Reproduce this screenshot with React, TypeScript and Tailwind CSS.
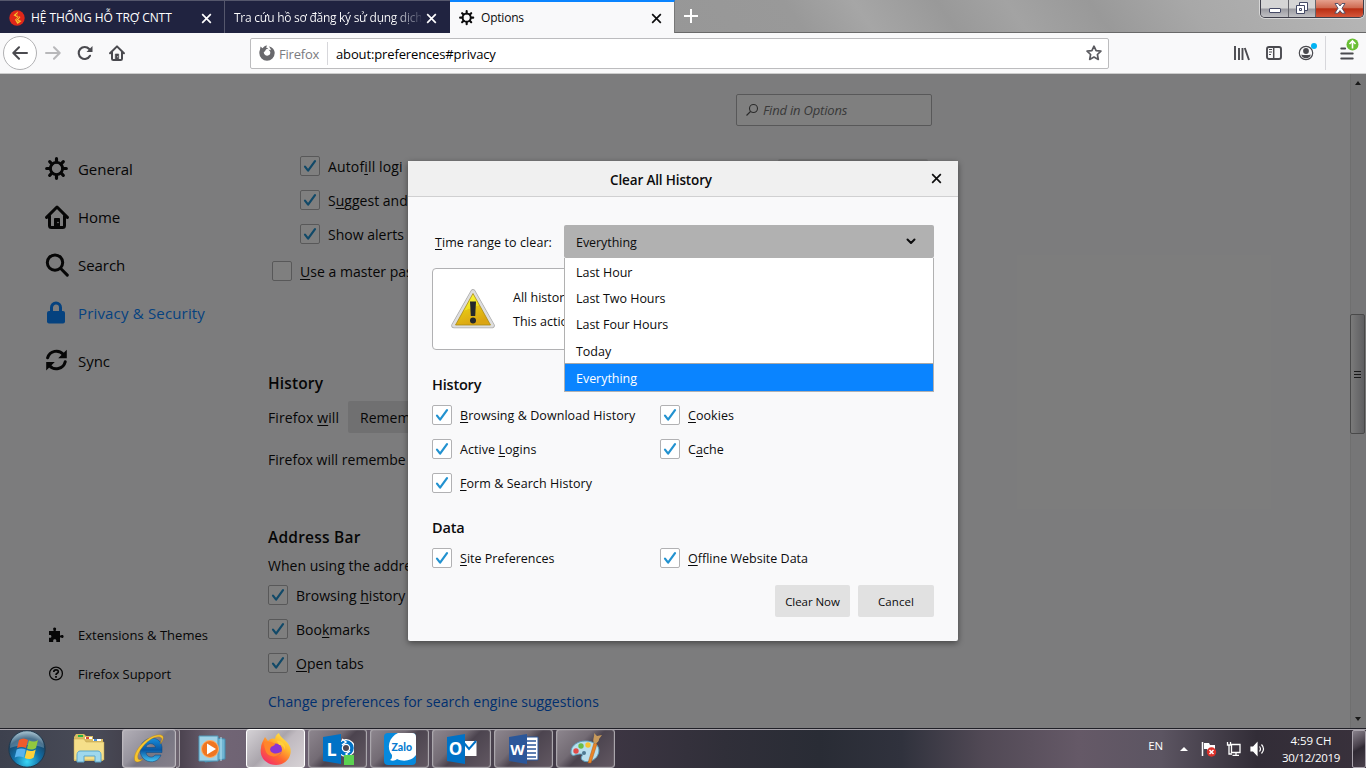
import React from "react";

type Kids = { children?: React.ReactNode };

const U = ({ children }: Kids) => (
  <span className="underline decoration-1 underline-offset-[2px] [text-decoration-skip-ink:none]">{children}</span>
);

function CloseX({ className }: { className: string }) {
  return (
    <svg className={className} width="12" height="12" viewBox="0 0 12 12" fill="none" stroke="currentColor" strokeWidth="1.8">
      <path d="M1.3 1.3 10.7 10.7M10.7 1.3 1.3 10.7" />
    </svg>
  );
}

function Gear({ size }: { size: number }) {
  return (
    <svg width={size} height={size} viewBox="0 0 24 24" fill="none" stroke="currentColor">
      <circle cx="11.5" cy="11.5" r="6.1" strokeWidth="2.9" />
      <path
        strokeWidth="3.2"
        strokeLinecap="round"
        d="M11.500 5V1.700M11.500 18v3.300M5 11.500H1.700M18 11.500h3.300M6.800 6.800 4.700 4.700M16.200 16.200l2.100 2.100M6.800 16.200 4.700 18.300M16.200 6.800l2.100-2.100"
      />
    </svg>
  );
}

function House({ size }: { size: number }) {
  return (
    <svg width={size} height={size} viewBox="0 0 24 24" fill="none" stroke="currentColor" strokeWidth="3" strokeLinejoin="round" strokeLinecap="round">
      <path d="M1.600 12.400 12 2l10.400 10.400" />
      <path d="M4.500 11v9.500a2 2 0 0 0 2 2h11a2 2 0 0 0 2-2V11" />
      <path d="M9.500 22v-8.500h5V22z" fill="currentColor" strokeWidth="1" />
      <circle cx="13" cy="17.500" r=".8" fill="#fff" stroke="none" />
    </svg>
  );
}

function SearchIcon() {
  return (
    <svg width="24" height="24" viewBox="0 0 24 24" fill="none" stroke="currentColor" strokeWidth="3" strokeLinecap="round">
      <circle cx="10" cy="9.600" r="7.700" />
      <path d="m15.700 15.500 6.600 6.600" />
    </svg>
  );
}

function LockIcon() {
  return (
    <svg width="24" height="24" viewBox="0 0 24 24">
      <rect x="2" y="10" width="18" height="12.500" rx="2" fill="currentColor" />
      <path d="M6.500 11V6.500a4.500 4.500 0 0 1 9 0V11" fill="none" stroke="currentColor" strokeWidth="3" />
    </svg>
  );
}

function SyncIcon() {
  return (
    <svg width="24" height="24" viewBox="0 0 24 24" fill="none" stroke="currentColor" strokeWidth="3">
      <path d="M2.600 8.800A9.200 9.200 0 0 1 18.500 5.500M20.200 12.800A9.200 9.200 0 0 1 4.300 16.500" strokeLinecap="round" />
      <path d="M21.800.8v8.400h-8.600zM1.200 21.400V13h8.600z" fill="currentColor" stroke="none" />
    </svg>
  );
}

function Check() {
  return (
    <span className="flex h-5 w-5 shrink-0 items-center justify-center rounded-[2px] border border-[#b1b1b3] bg-white">
      <svg width="18" height="18" viewBox="0 0 18 18" fill="none" stroke="#2292d0" strokeWidth="2.2" strokeLinecap="round" strokeLinejoin="round">
        <path d="m4 9.700 3.100 4L14 4.100" />
      </svg>
    </span>
  );
}

function Tabs() {
  return (
    <div className="flex h-[33px] shrink-0 items-start border-b border-[#696969] bg-[linear-gradient(55deg,#8d8d8d_0%,#999_58%,#a6a6a6_63%,#999_69%,#a3a3a3_74%,#999_80%,#a8a8a8_87%,#b6b6b6_100%)]">
      <div className="flex h-[33px] w-[225px] items-center border-t border-r border-[#55576c] bg-[#202340] pt-[2px] pl-[9px] text-white">
        <svg width="16" height="16" viewBox="0 0 16 16">
          <circle cx="8" cy="8" r="7.700" fill="#df2719" />
          <path d="M9 1.500 4.500 5.200 8.500 7.500 6 9.800 8.500 14l4-3-3.300-1.200 2.300-2.800-3.500-1.500z" fill="#f7c72e" />
          <path d="M9 3 7 5l3 2-2.500 2.500 2 2.500" stroke="#e8541e" fill="none" />
        </svg>
        <span className="ml-[6px] w-[170px] text-[12px] tracking-[-0.06px] whitespace-nowrap">HỆ THỐNG HỖ TRỢ CNTT</span>
        <CloseX className="h-[11px] w-[11px]" />
      </div>
      <div className="flex h-[33px] w-[225px] items-center border-t border-[#55576c] bg-[#202340] pt-[2px] pl-[9px] text-white">
        <span className="w-[187px] bg-linear-to-r from-white from-85% to-[#40435c] to-100% bg-clip-text text-[12px] tracking-[-0.28px] whitespace-nowrap text-transparent">
          Tra cứu hồ sơ đăng ký sử dụng dịch
        </span>
        <CloseX className="ml-[5px] h-[11px] w-[11px]" />
      </div>
      <div className="flex h-[34px] w-[225px] items-center border-t-2 border-r border-t-[#0a84ff] border-r-[#777] bg-[#f9f9fa] pl-[9px] text-[#0c0c0d]">
        <Gear size={16} />
        <span className="ml-[6px] w-[170px] text-[12px] tracking-[-0.2px]">Options</span>
        <CloseX className="h-[11px] w-[11px]" />
      </div>
      <svg className="mt-[9px] ml-[9px]" width="14" height="14" viewBox="0 0 14 14" stroke="#fff" strokeWidth="2">
        <path d="M7 0v14M0 7h14" />
      </svg>
      <div className="mr-[2px] ml-auto flex h-[18px] w-[104px] overflow-hidden rounded-b-[5px] border border-t-0 border-[#3e3e4a] shadow-[0_0_0_1px_rgba(255,255,255,.5)]">
        <div className="flex w-[28px] justify-center border-r border-[#66666c] bg-[linear-gradient(#d5d5d5_0_48%,#9a9aa0_52%,#c0c0c4)] pt-[8px]">
          <span className="h-[5px] w-[12px] rounded-[1px] border border-[#454a66] bg-white" />
        </div>
        <div className="flex w-[27px] justify-center border-r border-[#66666c] bg-[linear-gradient(#d5d5d5_0_48%,#9a9aa0_52%,#c0c0c4)] pt-[2px]">
          <svg width="12" height="12" viewBox="0 0 12 12" fill="#fff" stroke="#454a66">
            <path d="M3.500.5h8v8h-8z" />
            <path d="M.5 3.500h8v8h-8z" />
            <path d="M3.500 6.500h2v2h-2z" />
          </svg>
        </div>
        <div className="flex flex-1 justify-center bg-[linear-gradient(#e5a08d_0,#cf6b52_45%,#b92e13_52%,#d5563a)] pt-[3px]">
          <svg width="12" height="11" viewBox="0 0 12 11">
            <path d="M1 .5h3l2 2.500 2-2.500h3L8 5.300l3.200 4.900H8L6 7.600l-2 2.600H.8L4 5.300z" fill="#fff" stroke="#4b4a63" strokeWidth=".9" />
          </svg>
        </div>
      </div>
    </div>
  );
}

function Toolbar() {
  return (
    <div className="flex h-[41px] shrink-0 items-center border-b border-[#ccc] bg-[#f9f9fa] text-[#4a4a4f]">
      <div className="ml-[3px] flex h-[34px] w-[34px] items-center justify-center rounded-full border border-[#b1b1b3] bg-white">
        <svg width="16" height="16" viewBox="0 0 16 16" fill="none" stroke="currentColor" strokeWidth="2" strokeLinecap="round" strokeLinejoin="round">
          <path d="M15 8H1.500M7 2.300 1.300 8 7 13.700" />
        </svg>
      </div>
      <svg className="ml-2 text-[#b8b8ba]" width="16" height="16" viewBox="0 0 16 16" fill="none" stroke="currentColor" strokeWidth="2" strokeLinecap="round" strokeLinejoin="round">
        <path d="M1 8h13.500M9 2.300 14.700 8 9 13.700" />
      </svg>
      <svg className="ml-4" width="16" height="16" viewBox="0 0 16 16" fill="none" stroke="currentColor" strokeWidth="2.100" strokeLinecap="round">
        <path d="M13 10.800A6 6 0 1 1 12.200 4" />
        <path d="M15.500 1v6h-6z" fill="currentColor" stroke="none" />
      </svg>
      <div className="ml-4">
        <House size={16} />
      </div>
      <div className="ml-[125px] flex h-[31px] w-[859px] items-center rounded-[2px] border border-[#bcbcbe] bg-white pl-2">
        <svg width="16" height="16" viewBox="0 0 16 16" fill="#68686c">
          <path d="M1 4.800 1.500 1.500l2 1.800C4.300 2.300 5.800.6 8.200.5L7 2.400l2.300.8C8.300 4 7 4 6.500 5.200c-.4 1-1.300 1.300-1.800 2.300.3 2 1.700 3.200 3.600 3.200 2 0 3.200-1.600 3-3.400-.2-1.300-1-2-2-2.600 1.200-.2 2 .2 2.600.6-.2-1.500-1-2.800-2.200-3.900C13.500 2 15.700 4.600 15.700 8A7.700 7.700 0 0 1 .3 8c0-1.200.2-2.200.7-3.200z" />
        </svg>
        <span className="ml-1 w-[48px] pt-[3px] text-[13px] tracking-[-0.2px] text-[#7b7b80]">Firefox</span>
        <span className="h-[23px] border-r border-[#d7d7db]" />
        <span className="ml-2 w-[750px] pt-[3px] text-[13px] tracking-[-0.13px] text-black">about:preferences#privacy</span>
        <svg width="16" height="16" viewBox="0 0 16 16" fill="none" stroke="#5a5a5f" strokeWidth="1.700" strokeLinejoin="round">
          <path d="m8 1.200 2.100 4.400 4.800.6-3.500 3.300.9 4.900L8 12l-4.300 2.400.9-4.900L1.100 6.200l4.800-.6z" />
        </svg>
      </div>
      <svg className="ml-[125px]" width="16" height="16" viewBox="0 0 16 16" fill="none" stroke="currentColor" strokeWidth="2">
        <path d="M1 1v14M5 3v12M8.500 3v12M10.800 3l4.200 12" strokeWidth="1.900" />
      </svg>
      <svg className="ml-4" width="16" height="16" viewBox="0 0 16 16" fill="none" stroke="currentColor">
        <rect x="1" y="2" width="14" height="12" rx="2" strokeWidth="1.900" />
        <path d="M7.700 2v12" strokeWidth="1.500" />
        <path d="M3 4.500h3M3 7h3M3 9.500h2" />
      </svg>
      <div className="relative ml-4 h-4 w-4">
        <svg width="16" height="16" viewBox="0 0 16 16">
          <circle cx="8" cy="8" r="6.700" fill="none" stroke="currentColor" strokeWidth="1.200" />
          <circle cx="8" cy="6" r="2.900" fill="currentColor" />
          <path d="M3.300 9.500c1.400.8 8 .8 9.400 0C12.500 12 10.500 13.300 8 13.300S3.500 12 3.300 9.500z" fill="currentColor" />
        </svg>
        <span className="absolute -top-[2px] left-[13px] h-[6px] w-[6px] rounded-full bg-[#00b3f4]" />
      </div>
      <span className="ml-[11px] h-[34px] border-r border-[#d7d7db]" />
      <div className="relative ml-[14px] h-4 w-4">
        <svg width="14" height="16" viewBox="0 0 14 16" stroke="currentColor" strokeWidth="1.800">
          <path d="M1.200 3.500h4M1.200 8.500h11.600M1.200 13.500h11.600" strokeLinecap="round" />
        </svg>
        <svg className="absolute -top-[7px] left-[6px]" width="13" height="13" viewBox="0 0 13 13">
          <circle cx="6.500" cy="6.500" r="6" fill="#6abf34" />
          <path d="M6.500 10.500V3.500M3.500 6l3-3 3 3" stroke="#fff" strokeWidth="1.600" fill="none" />
        </svg>
      </div>
    </div>
  );
}

const NAV: [React.ReactNode, string, boolean][] = [
  [<Gear size={24} />, "General", false],
  [<House size={24} />, "Home", false],
  [<SearchIcon />, "Search", false],
  [<LockIcon />, "Privacy & Security", true],
  [<SyncIcon />, "Sync", false],
];

function Sidebar() {
  return (
    <nav className="flex w-[268px] shrink-0 flex-col pt-[71px] pl-[45px]">
      {NAV.map(([icon, label, on]) => (
        <div key={label} className={"flex h-12 items-center gap-[9px] text-[15px] " + (on ? "tracking-[0.17px] text-[#0a84ff]" : "tracking-[-0.05px]")}>
          {icon}
          <span>{label}</span>
        </div>
      ))}
      <div className="mt-[230px] flex h-[39px] items-center pl-[3px] text-[13px] tracking-[0.02px]">
        <svg width="17" height="16" viewBox="0 0 17 16" fill="currentColor">
          <path d="M1 4h4.200c.5 0 .5-.5.300-.9C4.700 1.600 5.200.4 6.600.4s2 1.200 1.200 2.700c-.2.400-.2.900.3.900H12v4c0 .6.500.6.900.4 1.400-.9 2.700-.4 2.700 1s-1.300 2-2.700 1.100c-.4-.3-.9-.2-.9.400V15H8.300v-1.500c0-.7-.8-1.200-1.600-1.200s-1.500.5-1.500 1.200V15H1v-4.200h1.200c.7 0 1.200-.6 1.200-1.400S2.900 8 2.200 8H1z" />
        </svg>
        <span className="ml-[13px] pt-[2px]">Extensions &amp; Themes</span>
      </div>
      <div className="flex h-[39px] items-center pl-[3px] text-[13px] tracking-[-0.05px]">
        <svg width="17" height="16" viewBox="0 0 17 16" fill="none" stroke="currentColor">
          <circle cx="8" cy="7.500" r="6.400" strokeWidth="1.300" />
          <path d="M5.800 6c0-3 4.500-2.800 4.500-.3 0 1.700-2.300 1.500-2.300 3.300" strokeWidth="1.700" />
          <path d="M8 10v1.700" strokeWidth="1.800" />
        </svg>
        <span className="ml-[13px] pt-[2px]">Firefox Support</span>
      </div>
    </nav>
  );
}

function Row({ children, className = "" }: Kids & { className?: string }) {
  return <div className={"flex h-[34px] items-center gap-2 whitespace-nowrap " + className}>{children}</div>;
}

function Preferences() {
  return (
    <main className="flex w-[664px] flex-col pt-5 text-[14px] tracking-[0.02px]">
      <div className="flex h-8 w-[196px] shrink-0 items-center self-end rounded-[2px] border border-[#b1b1b3] bg-white pl-2 text-[13px] tracking-[-0.18px] text-[#737373] italic">
        <svg className="mr-1 text-[#555]" width="14" height="14" viewBox="0 0 14 14" fill="none" stroke="currentColor" strokeWidth="1.100">
          <circle cx="8.500" cy="5.500" r="4" />
          <path d="m5.500 8.500-4 4" />
        </svg>
        <span className="pt-[2px]">Find in Options</span>
      </div>
      <div className="mt-[23px] flex h-[102px] justify-between">
        <div className="pl-8">
          <Row><Check /><span className="tracking-[0.14px]">Autof<U>i</U>ll logi</span></Row>
          <Row><Check /><span>S<U>u</U>ggest and</span></Row>
          <Row><Check /><span>Show alerts</span></Row>
        </div>
        <div className="mt-[10px] mr-1 h-8 w-[150px] rounded-[2px] bg-[#e1e1e2]" />
      </div>
      <Row className="mt-[3px] pl-1">
        <span className="h-5 w-5 rounded-[2px] border border-[#b1b1b3] bg-white" />
        <span><U>U</U>se a master pas</span>
      </Row>
      <h2 className="mt-[83px] flex h-[26px] items-center text-[15.500px] font-semibold tracking-[0.15px]">History</h2>
      <Row className="mt-[3px]">
        <span className="w-[72px] tracking-[0.1px]">Firefox <U>w</U>ill</span>
        <span className="flex h-8 w-[260px] items-center rounded-[2px] bg-[#e1e1e2] pl-3">Remem</span>
      </Row>
      <Row className="mt-[8px]">Firefox will remembe</Row>
      <h2 className="mt-[49px] flex h-[26px] items-center text-[15.500px] font-semibold tracking-[0.22px]">Address Bar</h2>
      <Row className="mt-[-3px]">When using the addre</Row>
      <Row className="mt-[-4px]"><Check /><span>Browsing <U>h</U>istory</span></Row>
      <Row><Check /><span>Boo<U>k</U>marks</span></Row>
      <Row><Check /><span><U>O</U>pen tabs</span></Row>
      <Row className="mt-[4px] tracking-[0.04px] text-[#0060df]">Change preferences for search engine suggestions</Row>
    </main>
  );
}

function Scrollbar() {
  return (
    <div className="ml-auto flex w-[16px] flex-col items-center border-l border-[#dedede] bg-[#ededee] pr-px">
      <span className="mt-[7px] border-x-[3.500px] border-b-[4px] border-x-transparent border-b-[#333]" />
      <div className="mt-[229px] -ml-px flex h-[120px] w-[15px] flex-col items-center justify-center gap-[2px] rounded-[2px] border border-[#929292] bg-linear-to-r from-[#f5f5f5] to-[#bdbdc2]">
        <span className="h-px w-[7px] bg-[#333]" />
        <span className="h-px w-[7px] bg-[#333]" />
        <span className="h-px w-[7px] bg-[#333]" />
      </div>
      <span className="mt-auto mb-[7px] border-x-[3.500px] border-t-[4px] border-x-transparent border-t-[#333]" />
    </div>
  );
}

function Option({ children, className = "" }: Kids & { className?: string }) {
  return <div className={"flex items-center pl-[11px] " + className}>{children}</div>;
}

function Item({ children }: Kids) {
  return (
    <Row>
      <Check />
      <span className="pt-[2px]">{children}</span>
    </Row>
  );
}

function Dialog() {
  return (
    <div className="flex h-[480px] w-[550px] flex-col rounded-[2px] bg-[#f9f9fa] text-[12.500px] tracking-[0.01px] text-[#0c0c0d] shadow-[0_2px_6px_rgba(0,0,0,.45)]">
      <div className="flex h-9 shrink-0 items-center border-b border-[#d0d0d1] bg-[#f0f0f0]">
        <span className="w-[506px] pt-[3px] text-center text-[13.500px] font-semibold tracking-[-0.15px]">Clear All History</span>
        <CloseX className="ml-[17px] h-[11px] w-[11px]" />
      </div>
      <div className="flex flex-1 flex-col px-6 pt-7">
        <div className="relative flex items-center">
          <span className="w-[132px] pt-[3px] pl-[3px] tracking-[0.08px]"><U>T</U>ime range to clear:</span>
          <div className="flex h-[33px] flex-1 items-center justify-between rounded-[2px] bg-[#b1b1b1] pr-[18px] pl-3 tracking-[-0.06px]">
            <span className="pt-[3px]">Everything</span>
            <svg width="10" height="7" viewBox="0 0 10 7" fill="none" stroke="currentColor" strokeWidth="2" strokeLinecap="round" strokeLinejoin="round">
              <path d="m1.500 1.500 3.500 3.500 3.500-3.500" />
            </svg>
          </div>
          <div className="absolute top-[33px] left-[132px] z-10 w-[370px] border border-t-0 border-[#b1b1b1] bg-white tracking-[-0.03px]">
            <Option className="h-[27px] pt-[4px]">Last Hour</Option>
            <Option className="h-[26px] pt-[3px]">Last Two Hours</Option>
            <Option className="h-[26px] pt-[3px]">Last Four Hours</Option>
            <Option className="h-[26px] pt-[4px]">Today</Option>
            <Option className="h-[28px] border-t border-[#a8a8a8] bg-[#0a84ff] pt-[3px] text-white">Everything</Option>
          </div>
        </div>
        <div className="mt-[10px] flex h-[82px] items-center rounded-[4px] border border-[#b1b1b3] bg-white pl-[18px]">
          <svg width="44" height="40" viewBox="0 0 44 40">
            <defs>
              <linearGradient id="warn" x1="0" y1="0" x2=".4" y2="1">
                <stop offset="0" stopColor="#ffff4c" />
                <stop offset=".55" stopColor="#eede1c" />
                <stop offset=".56" stopColor="#e5c413" />
                <stop offset="1" stopColor="#dba512" />
              </linearGradient>
            </defs>
            <path d="M22 3 41 36.500H3z" fill="#aaa" stroke="#aaa" strokeWidth="5.500" strokeLinejoin="round" />
            <path d="M22 3 41 36.500H3z" fill="#ddd" stroke="#dedede" strokeWidth="4" strokeLinejoin="round" />
            <path d="M22 4.500 39.500 36h-35z" fill="url(#warn)" stroke="#a98a13" strokeWidth=".8" strokeLinejoin="round" />
            <path d="M19 12.500h6l-.8 14.500h-4.400z" fill="#24282d" />
            <circle cx="22" cy="31.500" r="3" fill="#24282d" />
          </svg>
          <div className="ml-[18px] pt-[2px] leading-6">
            <p>All histor</p>
            <p>This actio</p>
          </div>
        </div>
        <h3 className="mt-[24px] flex h-[22px] items-center text-[14.500px] font-semibold tracking-[-0.2px]">History</h3>
        <div className="mt-[2px] grid grid-cols-[228px_1fr] tracking-[0.06px]">
          <Item><U>B</U>rowsing &amp; Download History</Item>
          <Item><U>C</U>ookies</Item>
          <Item>Active <U>L</U>ogins</Item>
          <Item>C<U>a</U>che</Item>
          <Item><U>F</U>orm &amp; Search History</Item>
        </div>
        <h3 className="mt-[17px] flex h-[22px] items-center text-[14.500px] font-semibold tracking-[-0.2px]">Data</h3>
        <div className="mt-[2px] grid grid-cols-[228px_1fr]">
          <Item><U>S</U>ite Preferences</Item>
          <Item><U>O</U>ffline Website Data</Item>
        </div>
        <div className="mt-[10px] flex justify-end gap-2 text-[11.500px]">
          <button className="h-8 w-[75px] rounded-[2px] bg-[#e1e1e1] pt-px tracking-[-0.05px]">Clear Now</button>
          <button className="h-8 w-[76px] rounded-[2px] bg-[#e1e1e1] pt-px tracking-[0.1px]">Cancel</button>
        </div>
      </div>
    </div>
  );
}

function TaskButton({ children, className = "w-[59px] border-[#aaa6ac] bg-[linear-gradient(135deg,#8d868e_0%,#736b74_38%,#4c444f_52%,#625862_100%)]" }: Kids & { className?: string }) {
  return (
    <div className={"flex h-[39px] shrink-0 items-center justify-center rounded-[3px] border shadow-[inset_0_0_1px_#ddd] " + className}>
      {children}
    </div>
  );
}

function OfficeIcon({ letter, color, className, children }: Kids & { letter: string; color: string; className: string }) {
  return (
    <div className="relative h-8 w-8">
      <svg width="32" height="32" viewBox="0 0 32 32">
        {children}
        <path d="M1 4 19 1v30L1 28z" fill={color} />
      </svg>
      <span className={"absolute top-[6px] left-[2px] w-4 text-center leading-5 font-bold text-white " + className}>{letter}</span>
    </div>
  );
}

function Taskbar() {
  return (
    <div className="flex h-10 shrink-0 items-center border-t border-[#202028] bg-[linear-gradient(90deg,#3d414e_0%,#494b57_7%,#3c3540_12%,#716575_16%,#6b6070_22%,#4b434f_35%,#3c3542_45%,#302f39_53%,#292c35_60%,#30323d_66%,#514955_72%,#655967_79%,#5c5562_85%,#322d37_92%,#39313c_100%)] text-white shadow-[inset_0_1px_0_#a7a3aa]">
      <svg className="ml-[7px]" width="40" height="38" viewBox="0 0 40 38">
        <defs>
          <radialGradient id="orb" cx=".5" cy=".85" r=".8">
            <stop offset="0" stopColor="#39d7f6" />
            <stop offset=".45" stopColor="#126fa7" />
            <stop offset=".8" stopColor="#174568" />
            <stop offset="1" stopColor="#86a6b8" />
          </radialGradient>
        </defs>
        <circle cx="20" cy="19" r="18.200" fill="url(#orb)" stroke="#203a4f" />
        <path d="M3 18a17 17 0 0 1 34 0c-8-4-24-4-34 0z" fill="#c4d9e4" opacity=".3" />
        <path d="M12 10c3-2 6-2 9 0l-2 8c-3-1.500-6-1.500-9 0z" fill="#ee5b2b" />
        <path d="M22 10.500c3 1.500 6 1.500 9-.5l-2 8c-3 2-6 2-9 .5z" fill="#91c83e" />
        <path d="M9.700 19.500c3-1.500 6-1.500 9 0l-2 8c-3-1.500-6-1.500-9 0z" fill="#59b3ed" />
        <path d="M19.700 20c3 1.500 6 1.500 9-.5l-2 8c-3 2-6 2-9 .5z" fill="#ffd13a" />
      </svg>
      <svg className="ml-[25px]" width="34" height="32" viewBox="0 0 34 32">
        <path d="M2 4 4 1h8l2 2h7v3h10v22H2z" fill="#d9bd63" />
        <path d="M2 6h10l2 3h18v18H2z" fill="#f5df8a" stroke="#bd9c49" strokeWidth=".5" />
        <path d="M6 2h5v2H6z" fill="#2ab545" />
        <path d="M13 4h7v2h-7zM21 6h8v2h-8z" fill="#fff" />
        <path d="M14 4h3v2h-3z" fill="#d84b35" />
        <path d="M22 6h3v2h-3z" fill="#438dd9" />
        <path d="M8 18h18c2 0 3 2 3 4v7h-6v-6H12v6H5v-7c0-2 1-4 3-4z" fill="#9fd8ed" stroke="#5ba6ca" />
      </svg>
      <div className="ml-[16px] flex w-[58px]">
        <TaskButton className="w-[54px] border-[#bbb7bd] bg-[linear-gradient(135deg,#b2afb7_0%,#96939d_40%,#777582_53%,#85808b_100%)]">
          <svg width="34" height="32" viewBox="0 0 34 32">
            <defs>
              <linearGradient id="ie" x1="0" x2="0" y1="0" y2="1">
                <stop stopColor="#188edc" />
                <stop offset=".5" stopColor="#0755a1" />
                <stop offset="1" stopColor="#45c6f5" />
              </linearGradient>
            </defs>
            <path d="M30 19.500H14c.5 5 7 6 9 2.500h6c-4 11-21 8-21-5S28 0 30 14zM14 14.500h9.500c-.5-5-9-5-9.500 0z" fill="url(#ie)" stroke="#0d447a" strokeWidth=".5" />
            <path d="M3 28C-1 20 16 0 29 2c4 1 2 6-1 9 2-4 3-6 0-7C18 2 4 20 6 25c0 2 2 2 5 1-3 3-6 4-8 2z" fill="#f8c52d" stroke="#a87813" strokeWidth=".4" />
          </svg>
        </TaskButton>
        <div className="h-[39px] w-1 rounded-r-[3px] border border-l-0 border-[#aaa6ac] bg-[#6d6470]" />
      </div>
      <svg className="ml-[18px]" width="28" height="28" viewBox="0 0 28 28">
        <path d="M7 2 27 4v20L7 27z" fill="#70b5d3" stroke="#438caf" />
        <path d="M1 1h19v25H1z" fill="#9fd2e7" stroke="#4e98b8" />
        <path d="M23 2v24" stroke="#b5e4f1" />
        <circle cx="12" cy="14" r="8.500" fill="#f07621" stroke="#ffaf68" />
        <path d="m9 8.500 9 5.500-9 5.500z" fill="#fff" />
      </svg>
      <TaskButton className="ml-[20px] w-[59px] border-white bg-[linear-gradient(135deg,#d5d2d6_0%,#aaa5ac_45%,#c0bac0_55%,#d7d2d5_100%)]">
        <svg width="32" height="32" viewBox="0 0 32 32">
          <defs>
            <linearGradient id="ff" x1=".9" y1="0" x2=".2" y2="1">
              <stop stopColor="#fff44f" />
              <stop offset=".35" stopColor="#ffb82d" />
              <stop offset=".65" stopColor="#ff672f" />
              <stop offset="1" stopColor="#f32872" />
            </linearGradient>
          </defs>
          <path d="M3 8 5 4l3 4c2-2 4-3 7-2 0-3 2-5 4-6 1 5 8 7 11 14 3 9-4 18-14 18S-1 24 1 15c0-3 1-5 2-7z" fill="url(#ff)" />
          <circle cx="16" cy="16.500" r="6" fill="#8a35d3" />
          <path d="M4 10c4-3 8-1 11 1-1 3-4 1-5 5 0 5 8 6 12 2-3 7-13 7-16 1-1-3-2-6-2-9z" fill="#ff852b" />
          <path d="M17 8c5-1 9 4 8 9-1-4-3-5-6-5z" fill="#ffcf3a" />
        </svg>
      </TaskButton>
      <div className="ml-[3px] flex gap-[3px]">
        <TaskButton>
          <OfficeIcon letter="L" color="#0072c6" className="text-[18px]">
            <circle cx="24" cy="15" r="6" fill="none" stroke="#fff" strokeWidth="6" />
            <circle cx="24" cy="15" r="6" fill="none" stroke="#0072c6" strokeWidth="3.500" />
            <path d="m20 6 4 3-4 3M28 18l-4 3 4 3" fill="none" stroke="#fff" strokeWidth="1.500" />
            <path d="M22 22h10v10H22z" fill="#5bd151" />
          </OfficeIcon>
        </TaskButton>
        <TaskButton>
          <div className="relative h-8 w-8">
            <svg width="32" height="32" viewBox="0 0 32 32">
              <rect width="32" height="32" rx="4" fill="#0689dc" />
              <path d="M14 0h14a4 4 0 0 1 4 4v18c-4 6-13 7-19 4-2 2-5 2-7 1 2-1 2-3 2-5C2 15 5 4 14 0z" fill="#fff" />
            </svg>
            <span className="absolute top-[7px] left-[8px] font-['Lato'] text-[10.500px] font-black text-[#087bd0]">Zalo</span>
          </div>
        </TaskButton>
        <TaskButton>
          <OfficeIcon letter="O" color="#0072c6" className="text-[17px]">
            <path d="M17 8h13.500v15H17z" fill="#fff" />
            <path d="m18 10 5 6 7-8" fill="none" stroke="#0072c6" strokeWidth="2" />
          </OfficeIcon>
        </TaskButton>
        <TaskButton>
          <OfficeIcon letter="W" color="#2b579a" className="text-[15px]">
            <path d="M17 4h13v23H17z" fill="#fff" stroke="#2b579a" />
            <path d="M19 8h9M19 12h9M19 16h9M19 20h9M19 24h9" stroke="#2b579a" strokeWidth="1.500" />
          </OfficeIcon>
        </TaskButton>
        <TaskButton>
          <svg width="34" height="32" viewBox="0 0 34 32">
            <path d="M2 19C2 10 15 5 25 10c8 4 5 14-1 17-7 4-14 0-11-4 2-3-4-2-7-1-2 1-4 0-4-3z" fill="#b9dfed" stroke="#5ca1bf" />
            <circle cx="7" cy="18" r="2.700" fill="#e14b48" />
            <circle cx="12" cy="13" r="2.700" fill="#6abd46" />
            <circle cx="19" cy="12" r="2.700" fill="#f5c431" />
            <circle cx="15" cy="20" r="2" fill="#4d7a93" />
            <path d="m19 30 6-20 3 1-6 19z" fill="#e88427" stroke="#ac5b18" strokeWidth=".5" />
            <path d="M25 10c-2-3 1-7 0-10l3 3 5-1-3 4c0 3-2 3-3 5z" fill="#c7995b" />
          </svg>
        </TaskButton>
      </div>
      <div className="ml-auto flex h-full items-center">
        <span className="pb-[5px] text-[11.500px] tracking-[-0.1px]">EN</span>
        <span className="ml-[17px] border-x-4 border-b-4 border-x-transparent border-b-white" />
        <svg className="ml-[13px]" width="16" height="16" viewBox="0 0 16 16">
          <path d="M1.500 1v14" stroke="#fff" strokeWidth="1.500" />
          <path d="M3 2h5l1 2h5v6H7L6 8H3z" fill="#fff" />
          <circle cx="10.500" cy="11" r="4.700" fill="#dc3029" />
          <path d="m8.500 9 4 4m0-4-4 4" stroke="#fff" strokeWidth="1.500" />
        </svg>
        <svg className="ml-[9px]" width="16" height="16" viewBox="0 0 16 16" fill="none" stroke="#fff" strokeWidth="1.300">
          <path d="M5.500 3.500H14v8H5.500zM10 12v2M6.500 14.300H13" />
          <path d="M1.500 1v3h3V1M3 4v9h3" />
        </svg>
        <svg className="ml-[8px]" width="16" height="16" viewBox="0 0 16 16" fill="none" stroke="#fff" strokeWidth="1.200">
          <path d="M1 6h2.500L7 2v12L3.500 10H1z" fill="#fff" />
          <path d="M9.500 5.500c1.300 1.700 1.300 3.300 0 5M11.500 3.500c2.700 3 2.700 6 0 9" />
        </svg>
        <div className="ml-[13px] w-[64px] text-center text-[11.500px] leading-[17px] tracking-[-0.3px] whitespace-nowrap">
          <div className="tracking-[-0.1px]">4:59 CH</div>
          <div>30/12/2019</div>
        </div>
        <div className="ml-[9px] h-[38px] w-[14px] rounded-[2px] border border-[#aaa4ad] bg-[linear-gradient(150deg,#88818b,#4a424d_40%,#302a34_50%,#49404b)]" />
      </div>
    </div>
  );
}

export default function App() {
  return (
    <div className="flex h-[768px] w-[1366px] flex-col overflow-hidden bg-[#f9f9fa] font-['Open_Sans','Noto_Sans',sans-serif] text-[#0c0c0d]">
      <Tabs />
      <Toolbar />
      <div className="relative flex h-[654px] shrink-0 overflow-hidden">
        <Sidebar />
        <Preferences />
        <Scrollbar />
        <div className="absolute inset-0 flex items-start bg-black/50 pt-[87px] pl-[408px]">
          <Dialog />
        </div>
      </div>
      <Taskbar />
    </div>
  );
}
